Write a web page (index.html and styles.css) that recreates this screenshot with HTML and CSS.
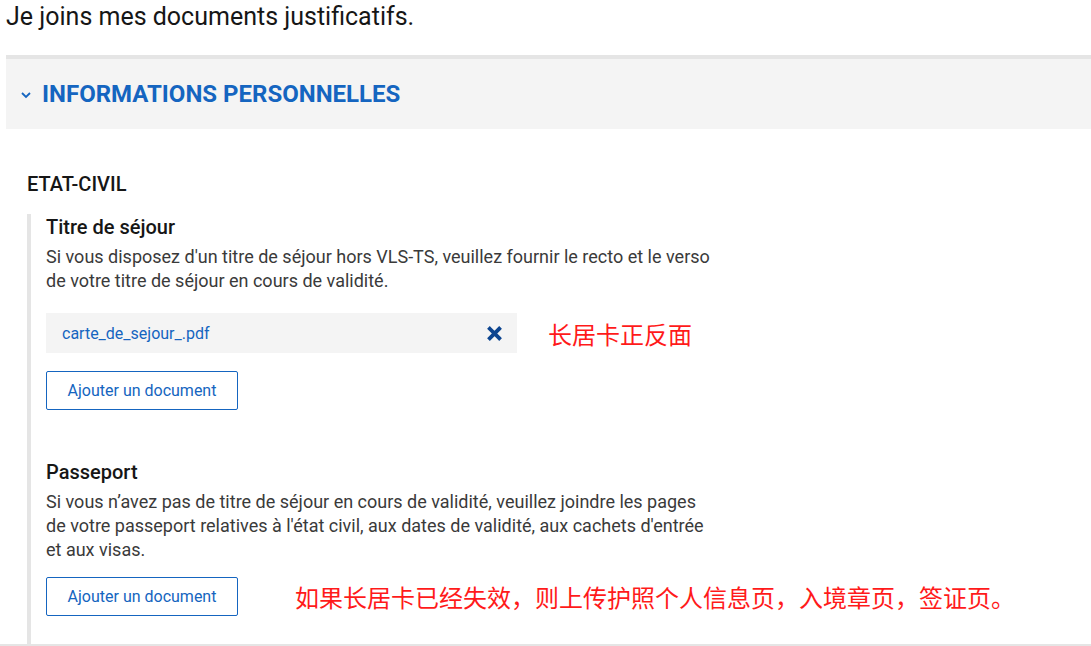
FILE: index.html
```html
<!DOCTYPE html>
<html lang="fr">
<head>
  <meta charset="UTF-8">
  <meta name="viewport" content="width=device-width, initial-scale=1.0">
  <title>Documents justificatifs</title>
  <link rel="stylesheet" href="styles.css">
</head>
<body>

  <p class="intro">Je joins mes documents justificatifs.</p>

  <!-- Accordion section -->
  <section class="panel">
    <div class="panel-head">
      <svg class="chevron" width="12" height="8" viewBox="0 0 12 8">
        <path d="M2 2 L6 6 L10 2" fill="none" stroke="#1565c0" stroke-width="1.8"/>
      </svg>
      <h2>INFORMATIONS PERSONNELLES</h2>
    </div>

    <div class="panel-body">
      <h3 class="group-title">ETAT-CIVIL</h3>

      <div class="doc-list">
        <div class="doc">
          <h4>Titre de séjour</h4>
          <p class="doc-help">Si vous disposez d'un titre de séjour hors VLS-TS, veuillez fournir le recto et le verso de votre titre de séjour en cours de validité.</p>

          <div class="row">
            <div class="file">
              <a href="#">carte_de_sejour_.pdf</a>
              <button class="remove" aria-label="Supprimer">
                <svg width="15" height="15" viewBox="0 0 15 15">
                  <path d="M2.8 2.8 L12.2 12.2 M12.2 2.8 L2.8 12.2" stroke="#0d4590" stroke-width="3.8" stroke-linecap="square"/>
                </svg>
              </button>
            </div>
            <span class="note note-first">长居卡正反面</span>
          </div>

          <button class="add-btn">Ajouter un document</button>
        </div>

        <div class="doc">
          <h4>Passeport</h4>
          <p class="doc-help doc-help-tight">Si vous n’avez pas de titre de séjour en cours de validité, veuillez joindre les pages de votre passeport relatives à l'état civil, aux dates de validité, aux cachets d'entrée et aux visas.</p>

          <div class="row">
            <button class="add-btn">Ajouter un document</button>
            <span class="note note-second">如果长居卡已经失效，则上传护照个人信息页，入境章页，签证页。</span>
          </div>
        </div>
      </div>
    </div>
  </section>

</body>
</html>
```

FILE: styles.css
```css
html {
  overflow: hidden;
}

body {
  margin: 0;
  height: 100vh;
  display: flex;
  flex-direction: column;
  font-family: Roboto, "Noto Sans", sans-serif;
  color: #161616;
  background: #fff;
  border-bottom: 2px solid #e5e5e5;
  box-sizing: border-box;
}

.intro {
  margin: 0;
  padding-left: 6px;
  font-size: 25px;
  line-height: 34px;
  height: 55px;
  flex-shrink: 0;
}

/* accordion */
.panel {
  flex: 1;
  display: flex;
  flex-direction: column;
  margin-left: 6px;
  min-height: 0;
}

.panel-head {
  display: flex;
  align-items: center;
  gap: 10px;
  height: 70px;
  flex-shrink: 0;
  padding-left: 14px;
  background-color: #f4f4f4;
  border-top: 4px solid #e5e5e5;
}

.chevron {
  margin-top: 2px;
}

.panel-head h2 {
  margin: 0;
  font-size: 24px;
  font-weight: 700;
  color: #1565c0;
}

.panel-body {
  flex: 1;
  display: flex;
  flex-direction: column;
  padding: 43px 0 0 21px;
  min-height: 0;
}

.group-title {
  margin: 0 0 18px;
  font-size: 20px;
  font-weight: 500;
  line-height: 24px;
}

.doc-list {
  flex: 1;
  border-left: 4px solid #e5e5e5;
  padding: 1px 0 0 15px;
}

.doc {
  padding-bottom: 50px;
}

.doc h4 {
  margin: 0 0 6px;
  font-size: 20px;
  font-weight: 500;
  line-height: 24px;
}

.doc-help {
  margin: 0 0 20px;
  width: 666px;
  font-size: 18px;
  line-height: 24px;
  color: #3a3a3a;
}

.doc-help-tight {
  margin-bottom: 15px;
}

.row {
  display: flex;
  align-items: center;
}

.file {
  display: flex;
  align-items: center;
  justify-content: space-between;
  width: 471px;
  height: 40px;
  box-sizing: border-box;
  padding: 0 15px 0 16px;
  background-color: #f4f4f4;
}

.file a {
  color: #1565c0;
  font-size: 16px;
  text-decoration: none;
}

.remove {
  background: none;
  border: none;
  padding: 0;
  display: flex;
  cursor: pointer;
}

.add-btn {
  margin-top: 18px;
  width: 192px;
  height: 39px;
  background: #fff;
  border: 1px solid #1565c0;
  border-radius: 2px;
  color: #1565c0;
  font-family: Roboto, sans-serif;
  font-size: 16px;
  cursor: pointer;
}

.row .add-btn {
  margin-top: 0;
}

.note {
  color: #ff1a1a;
  font-family: "Noto Sans CJK SC", sans-serif;
  font-size: 24px;
}

.note-first {
  margin-left: 31px;
}

.note-second {
  margin-left: 57px;
}
```
